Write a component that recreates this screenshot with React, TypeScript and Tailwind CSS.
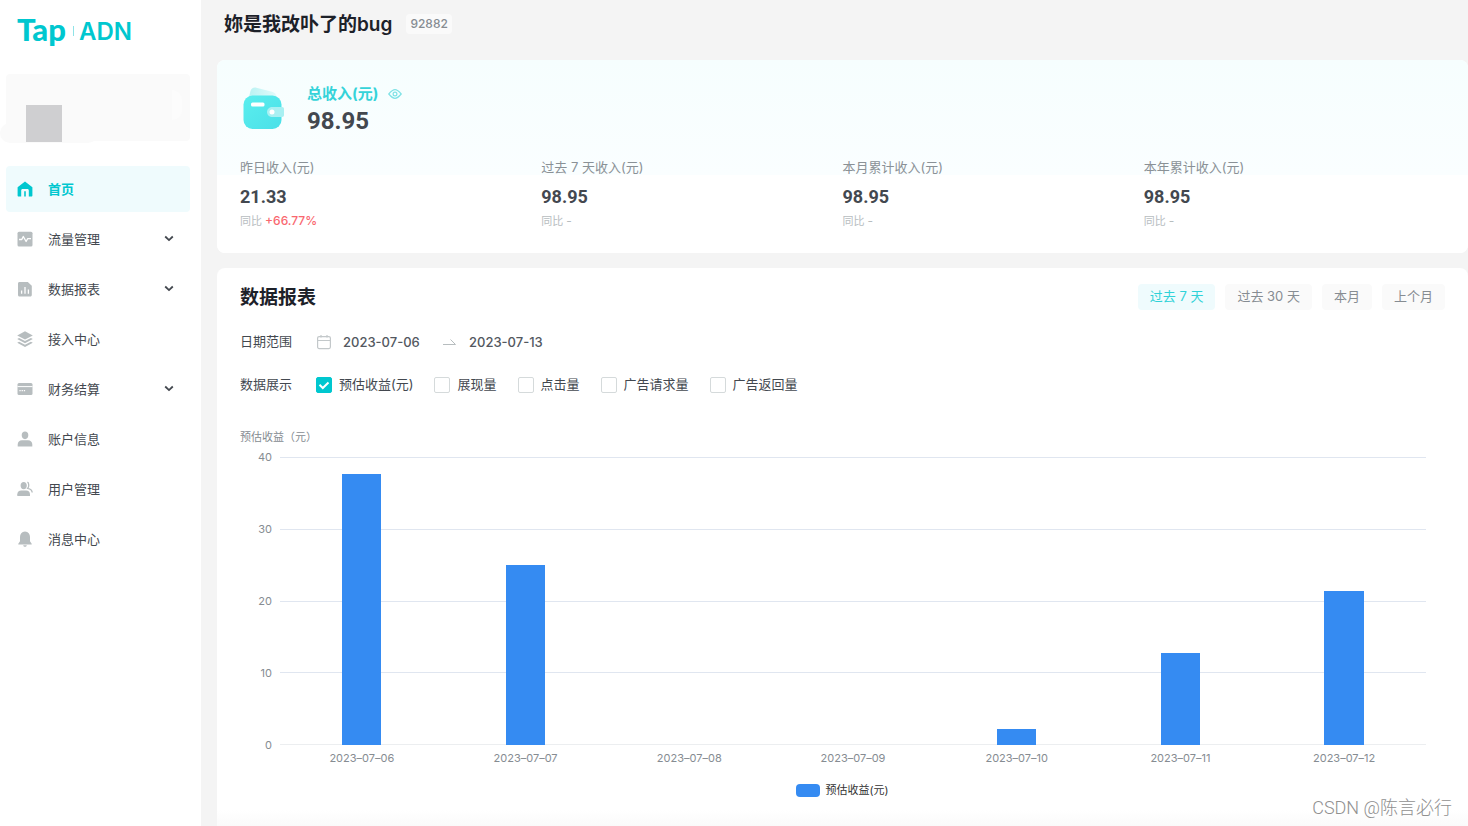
import React, { useState } from 'react';

interface NavItem {
    label: string;
    icon: React.ReactNode;
    expandable?: boolean;
}

interface Stat {
    label: string;
    value: string;
    change: string;
    up?: boolean;
}

const navItems: NavItem[] = [
    {
        label: '首页',
        icon: <path fillRule="evenodd" d="M8 .5.6 6.2v8.3c0 .6.4 1 1 1h2.600V9.400c0-.8.6-1.400 1.400-1.400h4.800c.8 0 1.400.6 1.400 1.400v6.100h2.600c.6 0 1-.4 1-1V6.200L8 .5ZM7.200 10.200h1.600v5.300H7.200z" />,
    },
    {
        label: '流量管理',
        expandable: true,
        icon: (
            <>
                <rect x=".5" y=".8" width="15" height="14.600" rx="1.500" />
                <path d="M2 8.500h2.800l1.500-3 2.800 5 1.500-2.800H14" fill="none" stroke="#fff" strokeWidth="1.300" strokeLinejoin="round" />
            </>
        ),
    },
    {
        label: '数据报表',
        expandable: true,
        icon: (
            <>
                <path d="M2.500.9h8.300l4 3.900v9.100c0 .9-.6 1.500-1.500 1.500H2.500c-.9 0-1.500-.6-1.500-1.500V2.400c0-.9.600-1.500 1.500-1.500Z" />
                <path d="M4.600 9.500v3.300M8 6v6.800M11.400 8.500v4.300" stroke="#fff" strokeWidth="1.300" />
            </>
        ),
    },
    {
        label: '接入中心',
        icon: (
            <>
                <path d="M8 .3 15.800 4.400 8 8.500.2 4.400z" />
                <path d="m.2 8 1.900-1L8 10.100 13.900 7l1.900 1L8 12.200z" />
                <path d="m.2 11.700 1.900-1L8 13.800l5.900-3.100 1.900 1L8 15.900z" />
            </>
        ),
    },
    {
        label: '财务结算',
        expandable: true,
        icon: (
            <>
                <rect x=".5" y="2" width="15" height="12" rx="1.500" />
                <path d="M.5 5.600h15" stroke="#fff" strokeWidth="1" />
                <path d="M2.400 9.700h1.300m.9 0h1.300m.900 0h1.300" stroke="#fff" strokeWidth="1.200" />
            </>
        ),
    },
    {
        label: '账户信息',
        icon: (
            <>
                <path d="M8 .6c2 0 3.300 1.400 3.300 3.500 0 2.300-1.200 4.200-3.300 4.200S4.700 6.400 4.700 4.100C4.700 2 6 .6 8 .6Z" />
                <path d="M5 9.300h6c2.600 0 4.300 1.700 4.300 4.300v1.800H.7v-1.800C.7 11 2.400 9.300 5 9.300Z" />
            </>
        ),
    },
    {
        label: '用户管理',
        icon: (
            <>
                <path d="M6.700 1.100c1.900 0 3.100 1.300 3.100 3.300 0 2.200-1.100 3.900-3.100 3.900S3.600 6.600 3.600 4.400c0-2 1.200-3.300 3.100-3.300Z" />
                <path d="M4.300 9.400h4.800c2.400 0 3.900 1.500 3.900 3.800v1.700H.3v-1.700c0-2.300 1.600-3.800 4-3.800Z" />
                <path d="M10.400 1.200c1.700.6 1.800 4.600.3 6.100 2.300.5 4.500 1.300 4.500 4.300" fill="none" stroke="currentColor" strokeWidth="1.300" />
            </>
        ),
    },
    {
        label: '消息中心',
        icon: (
            <>
                <path d="M8 .5c3.300.3 5 2.600 5 5.500v4.200l1.700 2.600v.7H1.300v-.7L3 10.200V6C3 3.100 4.700.8 8 .5Z" />
                <path d="M6.200 14.200h3.600c-.2 1-.9 1.600-1.800 1.600s-1.600-.6-1.800-1.600Z" />
            </>
        ),
    },
];

const stats: Stat[] = [
    { label: '昨日收入(元)', value: '21.33', change: '+66.77%', up: true },
    { label: '过去 7 天收入(元)', value: '98.95', change: '-' },
    { label: '本月累计收入(元)', value: '98.95', change: '-' },
    { label: '本年累计收入(元)', value: '98.95', change: '-' },
];

const ranges = ['过去 7 天', '过去 30 天', '本月', '上个月'];

const metrics = ['预估收益(元)', '展现量', '点击量', '广告请求量', '广告返回量'];

const revenue = [
    { date: '2023–07–06', value: 37.62 },
    { date: '2023–07–07', value: 25 },
    { date: '2023–07–08', value: 0 },
    { date: '2023–07–09', value: 0 },
    { date: '2023–07–10', value: 2.2 },
    { date: '2023–07–11', value: 12.8 },
    { date: '2023–07–12', value: 21.33 },
];

const ticks = [40, 30, 20, 10, 0];

const Sidebar: React.FC = () => {
    return (
        <aside className="w-[201px] shrink-0 bg-white">
            {/* Logo */}
            <a href="#" className="flex h-[62px] items-center pl-[17px] text-[#00c7cf]">
                <span className="pb-1 font-['Lato'] text-[31px] font-black leading-none">Tap</span>
                <span className="ml-[7px] mr-[5px] h-2.5 w-px bg-[#8fe3e7]" />
                <span className="pt-0.5 text-2xl font-semibold leading-none">ADN</span>
            </a>

            {/* Account */}
            <div className="relative mx-1.5 mt-3 mr-[11px] h-[67px] rounded bg-[#fafafa]">
                <div className="absolute -left-1.5 bottom-[-2px] h-5 w-[98px] rounded-full bg-[#fafafa]" />
                <div className="absolute right-2 top-4 h-[30px] w-2.5 rounded-r-full bg-[#fcfcfc]" />
                <div className="absolute left-5 top-[31px] h-[37px] w-9 bg-[#cfcfd1]" />
            </div>

            <nav className="ml-1.5 mr-[11px] mt-[25px] flex flex-col gap-1">
                {navItems.map((item, i) => {
                    const body = (
                        <>
                            <svg viewBox="0 0 16 16" className={i === 0 ? 'h-4 w-4' : 'h-4 w-4 text-[#b7bdbf]'} fill="currentColor">
                                {item.icon}
                            </svg>
                            <span className="ml-[15px] flex-1 pt-0.5 text-left">{item.label}</span>
                            {item.expandable && (
                                <svg viewBox="0 0 10 8" className="mr-4 h-2 w-2.5" fill="none" stroke="currentColor" strokeWidth="1.800">
                                    <path d="m1.200 1.500 3.800 3.600 3.800-3.600" />
                                </svg>
                            )}
                        </>
                    );
                    if (item.expandable) {
                        return (
                            <button key={item.label} className="flex h-[46px] items-center rounded pl-[11px] text-[13px] text-[#43484f]">
                                {body}
                            </button>
                        );
                    }
                    return (
                        <a
                            key={item.label}
                            href="#"
                            className={
                                i === 0
                                    ? 'flex h-[46px] items-center rounded bg-[#effbfd] pl-[11px] text-[13px] font-bold text-[#00c7cf]'
                                    : 'flex h-[46px] items-center rounded pl-[11px] text-[13px] text-[#43484f]'
                            }
                        >
                            {body}
                        </a>
                    );
                })}
            </nav>
        </aside>
    );
};

const WalletIcon: React.FC = () => (
    <svg viewBox="0 0 42 44" className="mt-0.5 h-11 w-[42px]">
        <defs>
            <linearGradient id="wallet" x1="0" y1="0" x2="1" y2="1">
                <stop offset="0" stopColor="#5aeeee" />
                <stop offset="1" stopColor="#4be0e8" />
            </linearGradient>
            <linearGradient id="note" x1="0" y1="0" x2="1" y2="0">
                <stop offset="0" stopColor="#b9f3f3" />
                <stop offset="1" stopColor="#e2fafa" />
            </linearGradient>
        </defs>
        <path d="M6 11 7.500 5C8.300 2.300 10.500 1 13.400 1.700l15.600 4c2.700.7 4.200 2.500 4.600 5.300H6Z" fill="url(#note)" />
        <rect x=".5" y="9.500" width="38" height="33.500" rx="9" fill="url(#wallet)" />
        <rect x="8" y="16.500" width="13.500" height="4" rx="1.500" fill="#fff" />
        <path d="M29.500 21H39c1.400 0 2 .7 2 2v6c0 1.300-.6 2-2 2h-9.500c-3 0-5.500-2-5.500-5s2.500-5 5.500-5Z" fill="#a9f0f2" />
        <circle cx="29" cy="26" r="2.500" fill="#fff" />
    </svg>
);

const IncomeCard: React.FC = () => {
    return (
        <section className="rounded-lg bg-white">
            <div className="rounded-lg bg-[linear-gradient(#f6fefe,#fafeff_115px,#fff_115px)] px-[23px] py-6">
                <div className="flex items-start pl-[3px]">
                    <WalletIcon />
                    <div className="ml-[22px]">
                        <div className="flex h-5 items-center">
                            <h2 className="text-[15px] font-bold leading-5 text-[#35d3d9]">总收入(元)</h2>
                            <button aria-label="隐藏收入" className="ml-2.5">
                                <svg viewBox="0 0 14 12" className="h-3 w-3.5" fill="none" stroke="#7fe2e6" strokeWidth="1.200">
                                    <path d="M.8 6C2.800 3.600 5 1.700 7 1.700S11.200 3.600 13.200 6C11.200 8.400 9 10.300 7 10.300S2.800 8.400.8 6Z" />
                                    <circle cx="7" cy="6" r="1.900" />
                                </svg>
                            </button>
                        </div>
                        <p className="mt-[3px] font-['Roboto'] text-2xl font-bold leading-7 text-[#43484f]">98.95</p>
                    </div>
                </div>

                <div className="mt-[22px] grid grid-cols-4">
                    {stats.map((stat) => (
                        <div key={stat.label}>
                            <p className="text-[13px] leading-5 text-[#8a9196]">{stat.label}</p>
                            <p className="mt-2.5 font-['Roboto'] text-lg font-bold leading-5 text-[#43484f]">{stat.value}</p>
                            <p className="mt-1.5 text-[11px] leading-4 text-[#b7bdbf]">
                                同比{' '}
                                <span className={stat.up ? 'text-xs font-medium leading-4 text-[#f9676f]' : 'text-xs leading-4'}>{stat.change}</span>
                            </p>
                        </div>
                    ))}
                </div>
            </div>
        </section>
    );
};

const RevenueChart: React.FC = () => {
    return (
        <figure className="mt-[34px] text-[11px] leading-4 text-[#868c92]">
            <figcaption>预估收益（元）</figcaption>
            <div className="mt-3 flex">
                <div className="-my-2 flex h-[304px] w-8 flex-col justify-between text-right">
                    {ticks.map((tick) => (
                        <span key={tick}>{tick}</span>
                    ))}
                </div>
                <div className="ml-2 mr-[19px] grid h-[288px] flex-1">
                    <div className="col-start-1 row-start-1 flex flex-col justify-between">
                        {ticks.map((tick) => (
                            <div key={tick} className={tick === 0 ? 'h-px bg-[#eceef0]' : 'h-px bg-[#e0e6f0]'} />
                        ))}
                    </div>
                    <div className="col-start-1 row-start-1 grid grid-cols-7">
                        {revenue.map((day) => (
                            <div key={day.date} className="flex items-end justify-center">
                                <div className="w-[24%] bg-[#358bf2]" style={{ height: `${(day.value / 40) * 100}%` }} />
                            </div>
                        ))}
                    </div>
                </div>
            </div>
            <div className="ml-10 mr-[19px] mt-[5px] grid grid-cols-7 text-center">
                {revenue.map((day) => (
                    <span key={day.date}>{day.date}</span>
                ))}
            </div>
            <div className="mt-4 flex items-center justify-center text-[#333]">
                <span className="mr-[5px] h-[13px] w-6 rounded bg-[#358bf2]" />
                预估收益(元)
            </div>
        </figure>
    );
};

const ReportCard: React.FC = () => {
    const [range, setRange] = useState(ranges[0]);
    const [checked, setChecked] = useState<string[]>([metrics[0]]);

    const toggle = (metric: string) => {
        setChecked(checked.includes(metric) ? checked.filter((m) => m !== metric) : [...checked, metric]);
    };

    return (
        <section className="mt-[15px] flex-1 rounded-t-lg bg-[linear-gradient(to_top,#fafafa,#fff_16px)] px-[23px] pt-4">
            <div className="flex items-start justify-between">
                <h2 className="text-[19px] font-bold leading-7 text-[#1d2129]">数据报表</h2>
                <div className="flex gap-2.5">
                    {ranges.map((item) => (
                        <button
                            key={item}
                            onClick={() => setRange(item)}
                            className={
                                item === range
                                    ? 'h-[26px] rounded bg-[#effbfd] px-3 text-[13px] text-[#2fd2d8]'
                                    : 'h-[26px] rounded bg-[#fafafa] px-3 text-[13px] text-[#868c92]'
                            }
                        >
                            {item}
                        </button>
                    ))}
                </div>
            </div>

            <div className="mt-5 flex h-5 items-center text-[13px] text-[#53585f]">
                <label htmlFor="start" className="w-[76px] text-[#43484f]">日期范围</label>
                <svg viewBox="0 0 16 16" className="h-4 w-4" fill="none" stroke="#c3c8ca" strokeWidth="1.200">
                    <rect x="1.600" y="2.600" width="12.800" height="12" rx="1.500" />
                    <path d="M1.600 6.500h12.800M5 1v2.500M11 1v2.500" />
                </svg>
                <input id="start" readOnly defaultValue="2023-07-06" className="ml-[11px] w-[88px] bg-transparent pt-0.5 font-medium outline-none" />
                <svg viewBox="0 0 14 8" className="ml-3 h-2 w-3.5" fill="none" stroke="#b7bdbf" strokeWidth="1">
                    <path d="M0 6.500h12.500L7.500 1.500" />
                </svg>
                <input aria-label="结束日期" readOnly defaultValue="2023-07-13" className="ml-3 w-[88px] bg-transparent pt-0.5 font-medium outline-none" />
            </div>

            <fieldset className="mt-[23px] flex h-5 items-center text-[13px] text-[#43484f]">
                <legend className="float-left w-[76px]">数据展示</legend>
                <div className="flex gap-[21px]">
                    {metrics.map((metric) => (
                        <label key={metric} className="flex items-center">
                            <span className="grid h-4 w-4">
                                <input
                                    type="checkbox"
                                    checked={checked.includes(metric)}
                                    onChange={() => toggle(metric)}
                                    className="col-start-1 row-start-1 h-4 w-4 appearance-none rounded-xs border border-[#d5dadb] bg-white checked:border-[#00c7cf] checked:bg-[#00c7cf]"
                                />
                                {checked.includes(metric) && (
                                    <svg viewBox="0 0 16 16" className="pointer-events-none z-10 col-start-1 row-start-1 h-4 w-4" fill="none" stroke="#fff" strokeWidth="2">
                                        <path d="m3.500 7.800 3.300 3.200 5.700-5.500" />
                                    </svg>
                                )}
                            </span>
                            <span className="ml-[7px]">{metric}</span>
                        </label>
                    ))}
                </div>
            </fieldset>

            <RevenueChart />
        </section>
    );
};

const App: React.FC = () => {
    return (
        <div className="relative flex min-h-screen bg-[#f4f4f4] font-['Inter','Noto_Sans_CJK_SC',sans-serif]">
            <Sidebar />
            <main className="ml-4 flex min-w-0 flex-1 flex-col">
                <header className="flex h-[60px] items-center pb-3 pl-[7px]">
                    <h1 className="pt-0.5 text-[19px] font-semibold text-[#1d2129]">妳是我改卟了的bug</h1>
                    <span className="ml-3.5 rounded bg-[#fafafa] px-1 text-xs font-medium leading-5 text-[#868c92]">92882</span>
                </header>
                <IncomeCard />
                <ReportCard />
            </main>

            {/* Watermark */}
            <p className="absolute bottom-1.5 right-4 font-['Roboto','Noto_Sans_CJK_SC',sans-serif] text-lg font-light leading-6 text-[#909090] [text-shadow:-1px_-1px_0_#fff]">
                CSDN @陈言必行
            </p>
        </div>
    );
};

export default App;
